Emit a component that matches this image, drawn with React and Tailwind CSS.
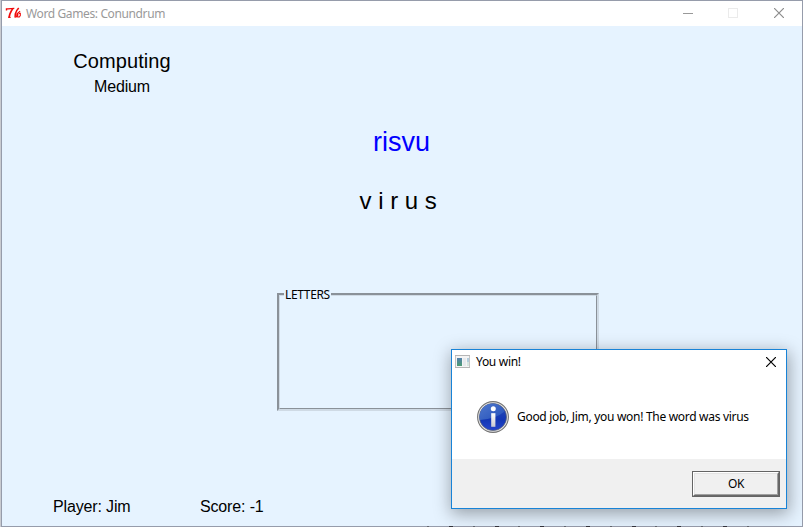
import React from 'react';

function TkFeather() {
  return (
    <svg className="h-4 w-4 shrink-0" viewBox="0 0 16 16" fill="none" stroke="#f00a0a">
      <path d="M1.5 5.6V3.9H3L9.3 3.4" strokeWidth="1.4" />
      <path d="M7.7 3.6L6.1 6.4 4.8 9.2 4.1 12.3" strokeWidth="1.7" />
      <path d="M3.1 12.4h2.6" strokeWidth="1.1" />
      <path d="M13.7 3L11.7 5.6 10.3 9 10.1 12.6" strokeWidth="1.5" />
      <path d="M15.1 6.2L11.3 9.4M11.3 12.3L12 9.4 13.5 8.8M12.7 9.4v2.6h1.6l1-1.4V8.4h-1.4" strokeWidth="1.1" />
    </svg>
  );
}

function CloseGlyph({ color }) {
  return (
    <svg className="h-[10px] w-[10px] shrink-0" viewBox="0 0 10 10" fill="none" stroke={color}>
      <path d="M0 0l10 10M10 0l-10 10" strokeWidth="1.2" />
    </svg>
  );
}

function DialogIcon() {
  return (
    <svg className="h-[13px] w-[15px] shrink-0" viewBox="0 0 15 13">
      <defs>
        <linearGradient id="screen" x1="0" y1="0" x2="0" y2="1">
          <stop offset="0" stopColor="#537fac" />
          <stop offset="1" stopColor="#4c9c72" />
        </linearGradient>
      </defs>
      <path d="M0 0h15v13H0z" fill="#c3c3c3" />
      <path d="M1 1h13v11H1z" fill="#f4f4f4" />
      <path d="M0 0h15v1H0zM0 12h15v1H0z" fill="#b5b5b5" />
      <path d="M2 3h5v8H2z" fill="url(#screen)" />
      <path d="M8 3h3v8H8z" fill="#e6e9ec" />
      <path d="M12 3h2v4h-2z" fill="#b2cddd" />
      <path d="M12 7h2v4h-2z" fill="#d5e5df" />
    </svg>
  );
}

function InfoIcon() {
  return (
    <svg className="h-8 w-8 shrink-0" viewBox="0 0 32 32">
      <defs>
        <linearGradient id="ball" x1="0" y1="0" x2="0" y2="1">
          <stop offset="0" stopColor="#2b50b4" />
          <stop offset=".6" stopColor="#1236b4" />
          <stop offset="1" stopColor="#2546cc" />
        </linearGradient>
        <linearGradient id="gloss" x1="0" y1="0" x2="1" y2="1">
          <stop offset="0" stopColor="#4f78cc" />
          <stop offset="1" stopColor="#2450bb" />
        </linearGradient>
        <linearGradient id="stem" x1="0" y1="0" x2="0" y2="1">
          <stop offset="0" stopColor="#fff" />
          <stop offset="1" stopColor="#c9cad0" />
        </linearGradient>
      </defs>
      <circle cx="16" cy="16" r="15.4" fill="#e7e7e7" stroke="#747474" strokeWidth="1.1" />
      <circle cx="16" cy="16" r="13.6" fill="url(#ball)" stroke="#62676f" strokeWidth=".7" />
      <path d="M3 19A13 13 0 0 1 27.5 10.5Q19 18 3 19z" fill="url(#gloss)" />
      <circle cx="16.3" cy="7.8" r="2.5" fill="#fff" />
      <path d="M14.2 12.2h4.2v13.6h-4.2z" fill="url(#stem)" />
    </svg>
  );
}

function MessageBox() {
  return (
    <section className="absolute left-[451px] top-[349px] flex h-[160px] w-[336px] flex-col border border-[#1883d7] bg-white font-['Noto_Sans',sans-serif] text-[12px] leading-4 text-black shadow-[1px_4px_16px_1px_rgba(0,0,0,0.34)]">
      <header className="flex h-[25px] shrink-0 items-center pb-[2px] pl-[3px] pr-[10px]">
        <DialogIcon />
        <h2 className="ml-[6px] mt-px grow whitespace-nowrap tracking-[-0.3px]">You win!</h2>
        <span className="mt-px">
          <CloseGlyph color="#000000" />
        </span>
      </header>
      <div className="flex grow items-center pb-[1px] pl-[25px]">
        <InfoIcon />
        <p className="ml-2 whitespace-nowrap tracking-[-0.3px]">Good job, Jim, you won! The word was virus</p>
      </div>
      <footer className="flex h-[49px] shrink-0 items-center justify-end bg-[#f0f0f0] pr-[6px]">
        <button className="h-[26px] w-[88px] border border-[#646464]">
          <span className="block h-full border-b border-r border-l border-t border-b-[#696969] border-l-white border-r-[#696969] border-t-white">
            <span className="flex h-full items-center justify-center border border-b-[#a0a0a0] border-l-[#e3e3e3] border-r-[#a0a0a0] border-t-[#e3e3e3] tracking-[-0.3px]">
              OK
            </span>
          </span>
        </button>
      </footer>
    </section>
  );
}

function DesktopEdge() {
  return (
    <div className="absolute bottom-0 left-[427px] flex h-px w-[322px] justify-between">
      {Array.from({ length: 15 }, (_, i) => (
        <span key={i} className={i % 2 ? 'h-px w-[4px] bg-[#33343c]' : 'h-px w-[2px] bg-[#62656e]'} />
      ))}
    </div>
  );
}

export default function App() {
  return (
    <div className="relative h-[527px] w-[803px] overflow-hidden bg-[#c9cbd1] pl-px">
      <main className="flex h-[527px] w-[802px] flex-col border border-[#969cab] bg-[#e6f3ff] font-['Liberation_Sans',Arial,sans-serif] text-black">
        <header className="flex h-[25px] shrink-0 items-center bg-white pb-px pl-[3px] pr-[18px]">
          <TkFeather />
          <h1 className="ml-[5px] mt-px grow whitespace-nowrap font-['Noto_Sans',sans-serif] text-[12px] leading-4 tracking-[-0.38px] text-[#999999]">
            Word Games: Conundrum
          </h1>
          <div className="flex items-center">
            <span className="mt-px h-px w-[10px] bg-[#999999]" />
            <span className="ml-[35px] mr-[36px] h-[10px] w-[10px] border border-[#ebebeb]" />
            <CloseGlyph color="#8c8c8c" />
          </div>
        </header>
        <div className="flex w-[240px] flex-col items-center pt-[23px]">
          <p className="text-[20px] leading-6 tracking-[0.1px]">Computing</p>
          <p className="mt-[4px] text-[16px] leading-5 tracking-[-0.15px]">Medium</p>
        </div>
        <div className="flex w-[799px] flex-col items-center">
          <p className="mt-[29px] text-[27px] leading-8 text-[#0000ff]">risvu</p>
          <p className="mt-[29px] whitespace-pre text-[24px] leading-7">{'v i r u s '}</p>
        </div>
        <div className="ml-[275px] mt-[78px] h-[118px] w-[322px] shrink-0 border-2 border-b-[#cfdae5] border-l-[#8a9199] border-r-[#cfdae5] border-t-[#8a9199]">
          <div className="h-full border border-b-[#8a9199] border-l-[#cfdae5] border-r-[#8a9199] border-t-[#cfdae5] pl-1">
            <span className="-mt-[9px] block w-[47px] whitespace-nowrap bg-[#e6f3ff] pl-px font-['Noto_Sans',sans-serif] text-[12px] leading-4 tracking-[-0.35px]">
              LETTERS
            </span>
          </div>
        </div>
        <footer className="mt-auto flex pb-[9px] pl-[51px] text-[16px] leading-5 tracking-[-0.15px]">
          <p className="w-[147px]">Player: Jim</p>
          <p>Score: -1</p>
        </footer>
      </main>
      <DesktopEdge />
      <MessageBox />
    </div>
  );
}
